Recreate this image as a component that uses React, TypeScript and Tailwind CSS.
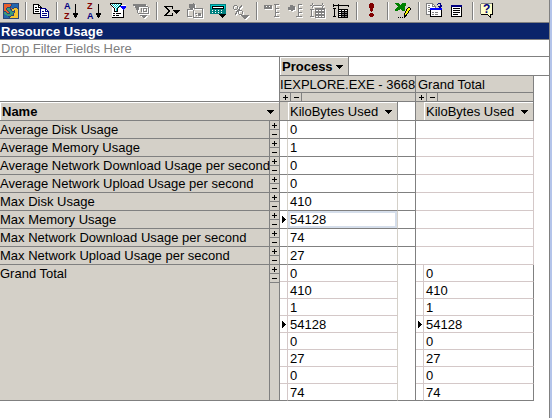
import React from "react";

const LINE = "border-[#808080]";
const FACE = "bg-[#d4d0c8]";

function Icon({ children }: { children: React.ReactNode }) {
  return (
    <svg width="17" height="18" viewBox="0 0 17 18" shapeRendering="crispEdges" aria-hidden="true" className="block shrink-0">
      {children}
    </svg>
  );
}

function Letter({ x, y, fill, size, children }: { x: number; y: number; fill: string; size: number; children: string }) {
  return (
    <text x={x} y={y} fill={fill} fontSize={size} fontWeight="700" fontFamily="Liberation Sans, Arial, sans-serif">
      {children}
    </text>
  );
}

/* Greyed-out glyph with the classic embossed white shadow. */
function Embossed({ children }: { children: React.ReactNode }) {
  return (
    <Icon>
      <g transform="translate(1 1)" fill="#fff">{children}</g>
      <g fill="#808080">{children}</g>
    </Icon>
  );
}

const palette: Record<string, string> = {
  k: "#000000",
  w: "#ffffff",
  n: "#000080",
  g: "#808080",
  b: "#0000ff",
  t: "#008080",
  c: "#00c8c8",
  y: "#ffff00",
  r: "#800000",
  v: "#008000",
  o: "#e8602c",
  u: "#2468b0",
  l: "#3c9c78",
  a: "#f4c430",
  d: "#2c4878",
};

function Pixels({ rows, x = 0, y = 0 }: { rows: string[]; x?: number; y?: number }) {
  return (
    <>
      {rows.flatMap((row, j) =>
        row.split("").map((ch, i) =>
          ch === "." ? null : <rect key={`${i}-${j}`} x={x + i} y={y + j} width="1" height="1" fill={palette[ch]} />,
        ),
      )}
    </>
  );
}

const puzzle = [
  "dddddddddddddddd",
  "doooooooduuuuuud",
  "doooooooduuuuuud",
  "dooooooduuuuuuud",
  "dooodddduuudddud",
  "doodllldoddaaadd",
  "doodlllddaaaaaad",
  "dooodllldaadaaad",
  "dddoodllldddaaad",
  "dlldoodlllldaaad",
  "dllldddllldaaaad",
  "dulllllllldaaaad",
  "duuulllldddaaaad",
  "duuuudddaaaaaaad",
  "duuuuudaaaaaaaad",
  "dddddddddddddddd",
];

const copy = [
  "kkkkkk..........",
  "kwwwwkk.........",
  "kwwwwkwk........",
  "kwkkwkkkk.......",
  "kwwwwwwnnnnnn...",
  "kwkkkkwnwwwwnn..",
  "kwwwwwwnwwwwnwn.",
  "kwkkkkwnwnnwnnnn",
  "kwwwwwwnwwwwwwwn",
  "kkkkkkknwnnnnnwn",
  ".......nwwwwwwwn",
  ".......nwnnnnnwn",
  ".......nwwwwwwwn",
  ".......nnnnnnnnn",
];

const arrow = ["..k..", "..k..", "..k..", "..k..", "..k..", "..k..", "..k..", "..k..", "..k..", "kkkkk", "kkkkk", ".kkk.", ".kkk.", "..k.."];

const filter = [
  "kkkkkkkkkkkk....",
  "kwcwcwcwcwck....",
  ".kwcwcwcwckwwwww",
  "..kwcwcwckbbbbbb",
  "..wkwcwckwwbbbbb",
  "..wwkwckwwwwbbb.",
  "..wwkwckwwwwwb..",
  "..wwkwckwwwwwk..",
  "..wwkkkkwwwwwk..",
  "..wwwwwwwwwwwk..",
  "..wkkwkkkkkwwk..",
  "..wwwwwwwwwwwk..",
  "..wkkwkkkwwwwk..",
  "..wwwwwwwwwwwk..",
  "..kkkkkkkkkkkk..",
];

const calc = [
  "tttttttttttttttt",
  "tcccccccccccccct",
  "tckkkkkkkkkkkkct",
  "tckwwwwwwwwwwkct",
  "tckkkkkkkkkkkkct",
  "tttttttttttttttt",
  "ttwttwttwttwtttt",
  "tttttttttttttttt",
  "ttwttwttwttwtttt",
  "tttttttttttttttt",
  ".........kkkkkkk",
  "..........kkkkk.",
  "...........kkk..",
  "............k...",
];

const fields = [
  "k....k..........",
  "kkkkkkkkkkkkkkkk",
  "k....k.........k",
  ".....k..........",
  "kkk..k..........",
  ".k...kkkkkkkkkk.",
  ".k...kwwkwwkwwk.",
  ".k...kkkkkkkkkk.",
  ".k...kwwkggkggk.",
  ".k...kkkkkkkkkk.",
  ".k...kwwkggkggk.",
  ".k...kkkkkkkkkk.",
  "kkk..kwwkggkggk.",
  ".....kkkkkkkkkk.",
];

const bang = [".rrr.", "rrrrr", "rrrrr", "rrrrr", "rrrrr", ".rrr.", ".rrr.", ".rrr.", "..r..", ".....", ".rrr.", "rrrrr", "rrrrr", ".rrr."];

const sheet = [
  "vvvv...vvvv.....",
  ".vvvv.vvvvv.....",
  "..vvvvvvvvv.....",
  "...vvvvvvv......",
  "..vvvvvvvv...kk.",
  ".vvvvvvvvv..kyyk",
  "vvvvv.vvvv.kyyyk",
  "vvv....vvv.kyyk.",
  "..........kyyk..",
  "..........kyyk..",
  ".........kyyk...",
  ".........kyk....",
  ".........kkk....",
  ".........kk.....",
  "...k.k.k.k......",
];

const pages = [
  "ggggggg.....nnn.",
  "gwwwwwgg...n..n.",
  "gwggwwgwg.....nn",
  "gwwwwwgggg..nnnn",
  "gwggwwwwwg...nn.",
  "gwwwbbbbbbbbbbbb",
  "gwggbbbbbbbbbbbb",
  "gwwwkwwwwwwwwwwk",
  "gwggkwwwwwwwwwwk",
  "gwwwkwggwgggwwwk",
  "gwwwkwwwwwwwwwwk",
  "ggggkwggwgggwwwk",
  "....kwwwwwwwwwwk",
  "....kkkkkkkkkkkk",
];

const list = [
  "nnnnnnnnnnn",
  "nnnnnnnnnnn",
  "kwwwwwwwwwk",
  "kwkkkkkkkwk",
  "kwwwwwwwwwk",
  "kwkkkkkkkwk",
  "kwwwwwwwwwk",
  "kwkkkkkkkwk",
  "kwwwwwwwwwk",
  "kwkkkkkwwwk",
  "kwwwwwwwwwk",
  "kkkkkkkkkkk",
];

type Tool = { label: string; icon: React.ReactNode; disabled?: boolean };

const groups: Tool[][] = [
  [{ label: "About", icon: <Icon><Pixels rows={puzzle} y={1} /></Icon> }],
  [{ label: "Copy", icon: <Icon><Pixels rows={copy} y={2} /></Icon> }],
  [
    {
      label: "Sort Ascending",
      icon: <Icon><Letter x={0} y={7} fill="#000080" size={9}>A</Letter><Letter x={0} y={17} fill="#800000" size={9}>Z</Letter><Pixels rows={arrow} x={9} y={2} /></Icon>,
    },
    {
      label: "Sort Descending",
      icon: <Icon><Letter x={0} y={7} fill="#800000" size={9}>Z</Letter><Letter x={0} y={17} fill="#000080" size={9}>A</Letter><Pixels rows={arrow} x={9} y={2} /></Icon>,
    },
    { label: "AutoFilter", icon: <Icon><Pixels rows={filter} y={1} /></Icon> },
    {
      label: "Show Top and Bottom Items",
      disabled: true,
      icon: <Embossed><path d="M0 2h13v2H0zM2 4h3v2H2zM3 6h2v2H3zM4 8h2v3H4zM5 4h11v1H5zM15 4h1v8h-1zM5 5h1v7H5zM6 11h9v1H6zM8 6h1v4H8zM10 6h4v4h-4zm1 1v2h2V7zM7 13h7v1H7zM9 14h4v1H9zM10 15h2v1h-2z" fillRule="evenodd" /></Embossed>,
    },
  ],
  [
    { label: "AutoCalc", icon: <Icon><path d="M0 4h9v3H8V6L7 5H3l3 4-3 4h4l1-1V11h1v3H0v-1l4-4-4-4z" fill="#000" /><path d="M9 8h7v1h-1v1h-1v1h-1v1h-1v-1h-1v-1h-1V9H9z" fill="#000" /></Icon> },
    {
      label: "Subtotal",
      disabled: true,
      icon: <Embossed><path d="M2 2h4V1h1v1h1v4H7v1H3V6H2zM0 7h7v1H1v6h4v1H0zM6 6h10v10H6zm1 1v8h8V7zM8 11h2v1H8zM11 11h3v3h-3zM9 13h1v1H9z" fillRule="evenodd" /></Embossed>,
    },
    { label: "Calculated Totals and Fields", icon: <Icon><Pixels rows={calc} y={2} /></Icon> },
    {
      label: "Show As",
      disabled: true,
      icon: <Embossed><path d="M1 3h3v1h1v3H4v1H1V7H0V4h1zm0 1v3h3V4zM6 8h3v1h1v3H9v1H6v-1H5V9h1zm0 1v3h3V9zM8 3h1v2H8v1H7v2H6v1H5v1H4v2H3v1H2v-2h1V9h1V8h1V7h1V5h1V4h1z" fillRule="evenodd" /><path d="M8 13h8v1h-1v1h-1v1h-1v1h-2v-1h-1v-1H9v-1H8z" /></Embossed>,
    },
  ],
  [
    { label: "Collapse", disabled: true, icon: <Embossed><path d="M0 3h8v4H0zm2 1v1h1V4zm3 0v1h1V4zM10 2h5v1h-3v3h3v1h-3v3h3v1h-3v3h3v1h-5v-1h1V3h-1z" fillRule="evenodd" /></Embossed> },
    { label: "Expand", disabled: true, icon: <Embossed><path d="M3 3h3v1h2v4H6v1H4V8H1V5h2zM11 2h4v1h-3v3h3v1h-3v3h3v1h-3v3h3v1h-6v-1h2z" /></Embossed> },
    {
      label: "Hide Details",
      disabled: true,
      icon: <Embossed><path d="M0 3h14v1H0zM2 1h1v5H2zM12 1h1v5h-1zM0 7h4v1H0zM1 8h1v6H1zM0 14h4v1H0zM5 6h10v10H5zm1 2v1h2V8zm3 0v1h2V8zm3 0v1h2V8zm-6 3v1h2v-1zm3 0v1h2v-1zm3 0v1h2v-1zm-6 3v1h2v-1zm3 0v1h2v-1zm3 0v1h2v-1z" fillRule="evenodd" /></Embossed>,
    },
    { label: "Show Details", icon: <Icon><Pixels rows={fields} y={2} /></Icon> },
  ],
  [{ label: "Refresh", icon: <Icon><Pixels rows={bang} x={5} y={1} /></Icon> }],
  [{ label: "Export to Microsoft Excel", icon: <Icon><Pixels rows={sheet} y={1} /></Icon> }],
  [
    { label: "Commands and Options", icon: <Icon><Pixels rows={pages} y={1} /></Icon> },
    { label: "Field List", icon: <Icon><Pixels rows={list} x={2} y={3} /></Icon> },
  ],
  [
    {
      label: "Help",
      icon: (
        <Icon>
          <path d="M1 1h12v12h-2v3h-1v-1H9v-1H8v-1H1z" fill="#000" />
          <path d="M1 2h11v10h-2v2H9v-1H8v-1H1z" fill="#ffffc8" />
          <path d="M1 1h11v1H1zM0 2h1v10H0z" fill="#808080" />
          <Letter x={3} y={11} fill="#000080" size={12}>?</Letter>
        </Icon>
      ),
    },
  ],
];

function Toolbar() {
  return (
    <div role="toolbar" aria-label="PivotTable" className={`flex h-[23px] items-stretch overflow-hidden border-b ${LINE} ${FACE}`}>
      {groups.map((tools, g) => (
        <React.Fragment key={g}>
          {g > 0 && <span className="mx-[3px] my-[2px] w-[2px] shrink-0 border-l border-r border-l-[#808080] border-r-white" />}
          {tools.map((tool) => (
            <button
              key={tool.label}
              type="button"
              aria-label={tool.label}
              disabled={tool.disabled}
              className={`flex shrink-0 items-center pl-[3px] ${g === 0 ? "w-[22px]" : "w-[23px]"}`}
            >
              {tool.icon}
            </button>
          ))}
        </React.Fragment>
      ))}
    </div>
  );
}

function Caret() {
  return (
    <svg width="7" height="4" viewBox="0 0 7 4" shapeRendering="crispEdges" aria-hidden="true" className="shrink-0">
      <path d="M0 0h7v1H6v1H5v1H4v1H3V3H2V2H1V1H0z" />
    </svg>
  );
}

function FieldButton({ label, bold = false }: { label: string; bold?: boolean }) {
  return (
    <button
      type="button"
      className={`flex h-[18px] w-full items-center justify-between whitespace-nowrap border-t border-l border-white pl-px pr-[5px] leading-[17px] ${FACE} ${bold ? "font-bold" : "font-normal"}`}
    >
      {label}
      <Caret />
    </button>
  );
}

function ExpandButton({ kind, row = false }: { kind: "plus" | "minus"; row?: boolean }) {
  return (
    <button
      type="button"
      aria-label={kind === "plus" ? "Expand" : "Collapse"}
      className={`flex items-center justify-center ${LINE} ${row ? "h-[8px] w-[11px] border-r" : "h-[9px] w-full border-b"}`}
    >
      <svg width="5" height="6" viewBox="0 0 5 6" shapeRendering="crispEdges" aria-hidden="true">
        <path d={kind === "plus" ? "M0 3h5v1H0zM2 1h1v5H2z" : "M0 3h5v1H0z"} />
      </svg>
    </button>
  );
}

function Marker() {
  return (
    <svg width="4" height="7" viewBox="0 0 4 7" shapeRendering="crispEdges" aria-label="Current row" className="ml-[2px]">
      <path d="M0 0h1v1h1v1h1v1h1v1H3v1H2v1H1v1H0z" />
    </svg>
  );
}

const usage = [
  { name: "Average Disk Usage", value: "0" },
  { name: "Average Memory Usage", value: "1" },
  { name: "Average Network Download Usage per second", value: "0" },
  { name: "Average Network Upload Usage per second", value: "0" },
  { name: "Max Disk Usage", value: "410" },
  { name: "Max Memory Usage", value: "54128", current: true },
  { name: "Max Network Download Usage per second", value: "74" },
  { name: "Max Network Upload Usage per second", value: "27" },
];

const totals = ["0", "410", "1", "54128", "0", "27", "0", "74"];

function PivotTable() {
  return (
    <table className="w-full table-fixed border-separate border-spacing-0 text-left leading-[16px] [&_td]:p-0 [&_th]:p-0 [&_th]:font-normal">
      <colgroup>
        <col className="w-[270px]" />
        <col className="w-[10px]" />
        <col className="w-[8px]" />
        <col className="w-[110px]" />
        <col className="w-[18px]" />
        <col className="w-[8px]" />
        <col className="w-[110px]" />
        <col />
      </colgroup>
      <thead>
        <tr className="h-[19px]">
          <td colSpan={2} rowSpan={3} className={`border-r border-b ${LINE}`} />
          <th colSpan={6} className={`border-b ${LINE}`}>
            <div className={`flex w-[69px] border-r ${LINE}`}>
              <FieldButton label="Process" bold />
            </div>
          </th>
        </tr>
        <tr className="h-[17px]">
          <th colSpan={3} scope="colgroup" className={`whitespace-nowrap border-r border-b ${LINE} ${FACE}`}>
            <div className="h-[16px] leading-[17px]">IEXPLORE.EXE - 3668</div>
          </th>
          <th colSpan={2} scope="colgroup" className={`whitespace-nowrap border-r border-b ${LINE} ${FACE}`}>
            <div className="h-[16px] pl-[2px] leading-[17px]">Grand Total</div>
          </th>
          <td />
        </tr>
        <tr className="h-[9px]">
          <td colSpan={3} className={`border-r border-b ${LINE} ${FACE}`}>
            <div className="flex"><ExpandButton kind="plus" row /><ExpandButton kind="minus" row /></div>
          </td>
          <td colSpan={2} className={`border-r border-b ${LINE} ${FACE}`}>
            <div className="flex"><ExpandButton kind="plus" row /><ExpandButton kind="minus" row /></div>
          </td>
          <td />
        </tr>
        <tr className="h-[19px]">
          <th colSpan={2} scope="col" className={`border-r border-b ${LINE}`}><FieldButton label="Name" bold /></th>
          <td className={`border-b ${LINE} ${FACE}`} />
          <th scope="col" className={`border-r border-b ${LINE}`}><FieldButton label="KiloBytes Used" /></th>
          <td className={`border-r border-b ${LINE}`} />
          <td className={`border-b ${LINE} ${FACE}`} />
          <th scope="col" className={`border-r border-b ${LINE}`}><FieldButton label="KiloBytes Used" /></th>
          <td />
        </tr>
      </thead>
      <tbody>
        {usage.map((row) => (
          <tr key={row.name} className="h-[18px]">
            <th scope="row" className={`whitespace-nowrap border-r border-b ${LINE} ${FACE}`}>
              <div className="h-[17px] leading-[17px]">{row.name}</div>
            </th>
            <td className={`border-r ${LINE} ${FACE}`}>
              <ExpandButton kind="plus" />
              <ExpandButton kind="minus" />
            </td>
            <td className="border-r border-b border-r-[#d4d0c8] border-b-[#808080]">{row.current && <Marker />}</td>
            <td className="border-r border-b border-r-[#d4d0c8] border-b-[#808080]">
              <div className={`h-[17px] pl-[2px] leading-[17px] ${row.current ? "ring-2 ring-inset ring-[#d5deeb]" : ""}`}>{row.value}</div>
            </td>
            <td className={`border-r border-b ${LINE}`} />
            <td colSpan={2} className="border-r border-b border-[#d4c8c8]" />
            <td />
          </tr>
        ))}
        {totals.map((value, i) => {
          const last = i === totals.length - 1;
          const bottom = last ? "border-b-[#808080]" : "border-b-[#d4c8c8]";
          return (
            <tr key={i} className="h-[17px]">
              {i === 0 && (
                <>
                  <th scope="rowgroup" rowSpan={8} className={`border-r border-b align-top ${LINE} ${FACE}`}>
                    <div className="leading-[18px]">Grand Total</div>
                  </th>
                  <td rowSpan={8} className={`border-r border-b align-top ${LINE} ${FACE}`}>
                    <ExpandButton kind="plus" />
                    <ExpandButton kind="minus" />
                  </td>
                </>
              )}
              <td className={`border-r border-b border-r-[#d4c8c8] ${bottom}`}>{value === "54128" && <Marker />}</td>
              <td className={`border-r border-b border-r-[#d4d0c8] ${bottom}`}><div className="h-[16px] pl-[2px] leading-[18px]">{value}</div></td>
              {i === 0 && <td rowSpan={8} className={`border-r border-b ${LINE}`} />}
              <td className={`border-r border-b border-r-[#d4c8c8] ${bottom}`}>{value === "54128" && <Marker />}</td>
              <td className={`border-r border-b border-r-[#808080] ${bottom}`}><div className="h-[16px] pl-[2px] leading-[18px]">{value}</div></td>
              <td />
            </tr>
          );
        })}
      </tbody>
    </table>
  );
}

export default function App() {
  return (
    <div className="min-h-screen bg-[#b4c4ea] pr-[2px] font-['Liberation_Sans',Arial,sans-serif] text-[13px] text-black">
      <main className={`min-h-screen border-r bg-white ${LINE}`}>
        <Toolbar />
        <h1 className={`h-[17px] border-b bg-[#0a246a] pl-px text-[13px] leading-[17px] font-bold text-white ${LINE}`}>Resource Usage</h1>
        <div className={`h-[17px] border-b pl-px leading-[17px] text-[#808080] ${LINE}`}>Drop Filter Fields Here</div>
        <PivotTable />
      </main>
    </div>
  );
}
